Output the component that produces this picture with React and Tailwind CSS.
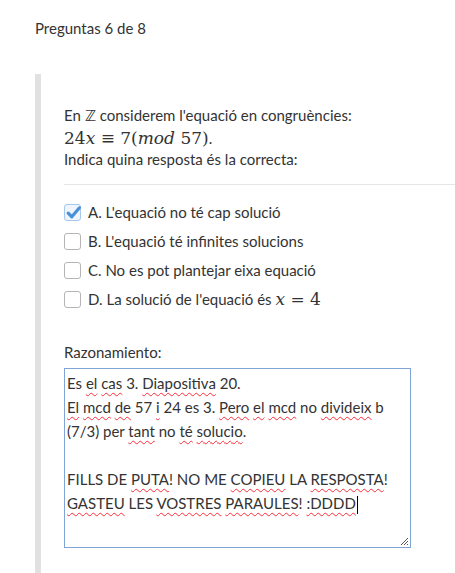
import React from "react";

const sq = "underline decoration-wavy decoration-red-500 decoration-1 underline-offset-[3px]";

function Box({ checked }) {
  if (checked) {
    return (
      <span className="relative block h-[17px] w-[17px] rounded-[3px] border border-[#a8c8ea] bg-[#eef5fc]">
        <svg viewBox="0 0 16 16" className="absolute left-[0px] top-[-1px] h-[17px] w-[17px]">
          <path d="M3 8.6 L6.4 12 L13.6 3.6" fill="none" stroke="#4a90d9" strokeWidth="3" strokeLinecap="round" strokeLinejoin="round" />
        </svg>
      </span>
    );
  }
  return <span className="block h-[17px] w-[17px] rounded-[3px] border border-[#b5b5b5] bg-white" />;
}

function Option({ checked, children }) {
  return (
    <label className="flex h-[29px] items-center gap-[7px]">
      <Box checked={checked} />
      <span>{children}</span>
    </label>
  );
}

const M = ({ children }) => (
  <span className="font-['DejaVu_Serif',serif] text-[17px] leading-[20px]">{children}</span>
);

export default function App() {
  return (
    <div className="min-h-[573px] bg-white font-['Lato',sans-serif] text-[15px] text-[#333]">
      <div className="px-[35px] pt-[17px] text-[15px]">Preguntas 6 de 8</div>
      <div className="ml-[35px] mt-[34px] border-l-[6px] border-[#e1e1e1] pb-[26px] pl-[23px]">
        <div className="pt-[31px] leading-[21px]">
          <div>
            En <span className="font-['DejaVu_Sans',sans-serif]">ℤ</span> considerem l'equació en congruències:
          </div>
          <div className="leading-[22px]">
            <M>
              24<i>x</i> ≡ 7(<i>mod</i> 57)
            </M>
            .
          </div>
          <div>Indica quina resposta és la correcta:</div>
        </div>
        <div className="mt-[14px] border-t border-[#e6e6e6]" />
        <div className="mt-[13px]">
          <Option checked>A. L'equació no té cap solució</Option>
          <Option>B. L'equació té infinites solucions</Option>
          <Option>C. No es pot plantejar eixa equació</Option>
          <Option>
            D. La solució de l'equació és <M><i>x</i> = 4</M>
          </Option>
        </div>
        <div className="mt-[27px]">Razonamiento:</div>
        <div className="relative mt-[5px] h-[180px] w-[347px] border border-[#7fa4d8] px-[2px] pt-[2px] leading-[24px]">
          <div>
            Es <span className={sq}>el</span> <span className={sq}>cas</span> 3. <span className={sq}>Diapositiva</span> 20.
          </div>
          <div>
            <span className={sq}>El</span> <span className={sq}>mcd</span> <span className={sq}>de</span> 57 <span className={sq}>i</span> 24 es 3. <span className={sq}>Pero</span> <span className={sq}>el</span> <span className={sq}>mcd</span> no <span className={sq}>divideix</span> b
          </div>
          <div>
            (7/3) per <span className={sq}>tant</span> no <span className={sq}>té</span> <span className={sq}>solucio</span>.
          </div>
          <div>&nbsp;</div>
          <div>
            FILLS DE <span className={sq}>PUTA</span>! NO ME <span className={sq}>COPIEU</span> LA <span className={sq}>RESPOSTA</span>!
          </div>
          <div>
            <span className={sq}>GASTEU</span> LES <span className={sq}>VOSTRES</span> <span className={sq}>PARAULES</span>! <span className={sq}>:DDDD</span>
            <span className="ml-px inline-block h-[18px] w-px bg-black align-middle" />
          </div>
          <svg viewBox="0 0 10 10" className="absolute bottom-[1px] right-[1px] h-[10px] w-[10px]">
            <path d="M9 2 L2 9 M9 5 L5 9 M9 8 L8 9" stroke="#555" strokeWidth="1" />
          </svg>
        </div>
      </div>
    </div>
  );
}
